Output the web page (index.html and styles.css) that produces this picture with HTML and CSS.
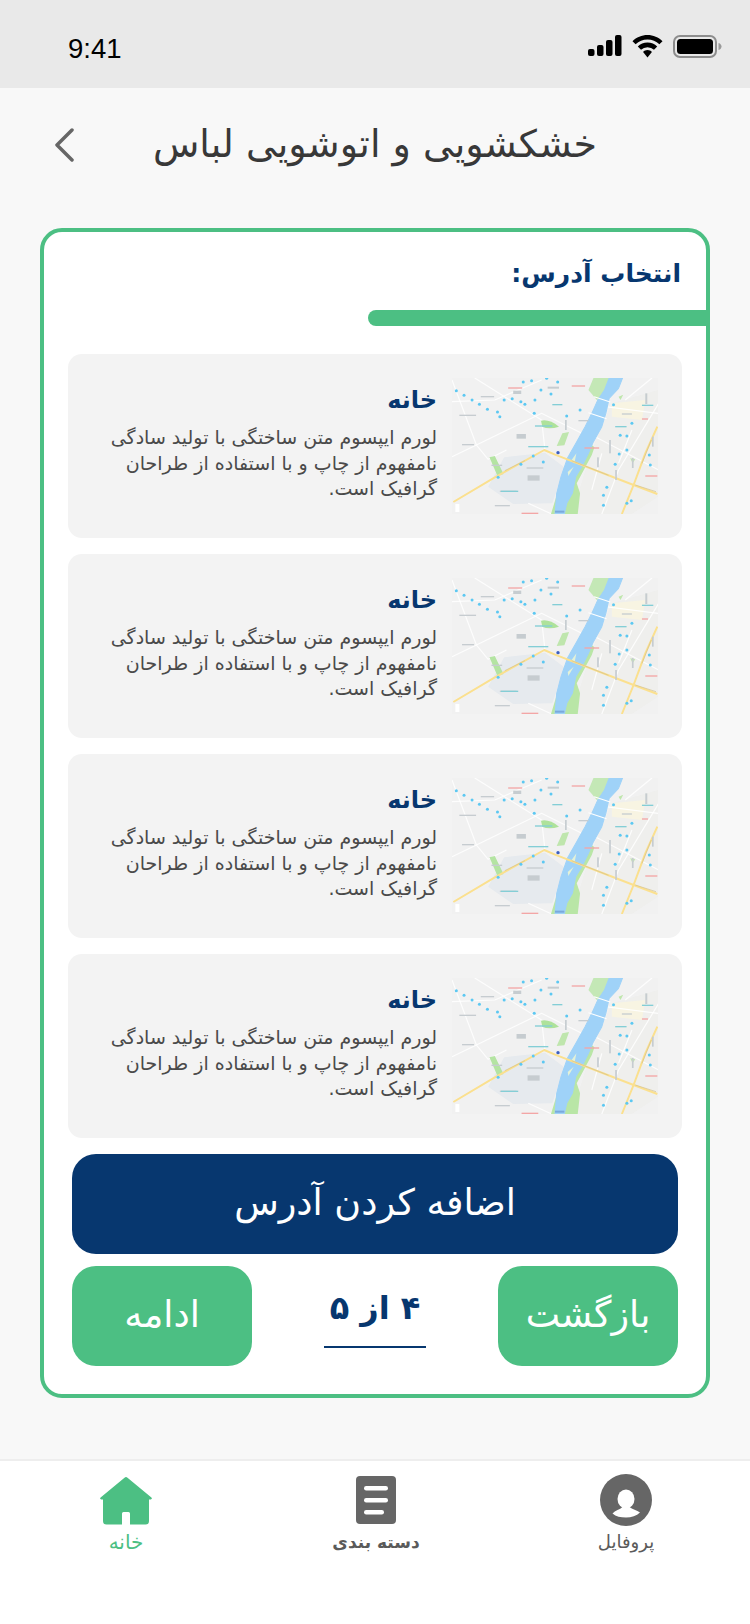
FILE: index.html
```html
<!DOCTYPE html>
<html lang="fa" dir="rtl">
<head>
<meta charset="utf-8">
<title>خشکشویی و اتوشویی لباس</title>
<link rel="stylesheet" href="styles.css">
</head>
<body>
<svg class="defs" width="0" height="0" aria-hidden="true">
  <defs>
    <filter id="soft" x="0" y="0" width="100%" height="100%"><feGaussianBlur stdDeviation="1.3"/></filter>
    <symbol id="map" viewBox="22 24 616 408" preserveAspectRatio="none">
      <rect x="22" y="24" width="616" height="408" fill="#f1f1f1"/>
      <g filter="url(#soft)">
        <path d="M500 100 L638 60 V380 L560 432 H380 L440 240Z" fill="#efefed"/>
        <path d="M500 100 L600 90 L590 150 L500 140Z" fill="#f8f4e2"/>
        <path d="M130 350 L178 262 L300 248 L358 292 L322 400 L205 402Z" fill="#e6eaee"/>
        <g fill="none" stroke="#fff" stroke-width="3.500" stroke-opacity=".85">
          <path d="M22 30 L95 225 L130 268 L185 240"/>
          <path d="M22 260 L95 225 L290 130 L410 190"/>
          <path d="M90 24 L290 150 L300 240"/>
          <path d="M22 95 L150 90 L290 30"/>
          <path d="M430 190 L640 300"/>
          <path d="M500 24 L430 250"/>
          <path d="M640 100 L520 300 L470 432"/>
          <path d="M540 90 L620 24"/>
          <path d="M480 110 L638 130"/>
          <path d="M250 400 L320 432"/>
          <path d="M470 250 L440 360"/>
          <path d="M560 180 L520 280"/>
        </g>
        <path d="M445 24 H495 L485 78 L455 90 L430 60Z" fill="#c4e8b6"/>
        <path d="M288 152 Q312 146 342 170 Q312 180 292 170Z" fill="#aee29a"/>
        <path d="M335 228 L352 190 L372 186 L358 226Z" fill="#bfe6ad"/>
        <path d="M134 262 L150 258 L176 312 L158 318Z" fill="#b4e4a2"/>
        <path d="M555 265 L570 268 L562 280Z M520 80 L534 74 L526 90Z" fill="#bfe6ad"/>
        <path d="M410 200 L355 310 L318 432 H398 L405 370 L395 340 L440 255 L448 232Z" fill="#b9e6a6"/>
        <path d="M492 24 H532 L520 55 L492 85 L482 130 L470 170 L445 215 L430 250 L410 290 L392 320 L382 370 L365 400 L358 432 H330 L335 370 L348 320 L367 265 L395 215 L420 170 L440 130 L458 90 L478 60Z" fill="#9fd2f8" stroke="#9fd2f8" stroke-width="3" stroke-linejoin="round"/>
        <path d="M378 272 L394 250 L388 280Z M368 306 L386 290 L370 318Z" fill="#e3f1d8"/>
        <g fill="none" stroke="#fff" stroke-width="3">
          <path d="M447 80 L495 96"/>
          <path d="M430 128 L484 146"/>
        </g>
        <g fill="none" stroke="#fbe08e" stroke-width="6" stroke-linejoin="round">
          <path d="M26 396 L150 322 L298 240 L330 254 L565 345 L636 372"/>
          <path d="M636 170 L600 250 L565 345 L530 432"/>
        </g>
        <g fill="none" stroke="#d2bf8e" stroke-width="2">
          <path d="M180 302 L240 272"/>
          <path d="M380 272 L490 316"/>
          <path d="M618 210 L590 280"/>
          <path d="M570 345 L632 365"/>
        </g>
        <g fill="#5cc8f2">
          <circle cx="35" cy="62" r="4.500"/><circle cx="58" cy="76" r="4.500"/><circle cx="82" cy="90" r="4.500"/>
          <circle cx="104" cy="103" r="4.500"/><circle cx="128" cy="118" r="4.500"/><circle cx="158" cy="126" r="4.500"/>
          <circle cx="165" cy="140" r="4.500"/><circle cx="178" cy="90" r="4.500"/><circle cx="202" cy="86" r="4.500"/>
          <circle cx="235" cy="36" r="4.500"/><circle cx="260" cy="32" r="4.500"/><circle cx="228" cy="95" r="4.500"/>
          <circle cx="240" cy="103" r="4.500"/><circle cx="270" cy="90" r="4.500"/><circle cx="268" cy="130" r="4.500"/>
          <circle cx="288" cy="60" r="4.500"/><circle cx="305" cy="25" r="4.500"/><circle cx="338" cy="36" r="4.500"/>
          <circle cx="318" cy="72" r="4.500"/><circle cx="365" cy="138" r="4.500"/><circle cx="405" cy="120" r="4.500"/>
          <circle cx="265" cy="258" r="4.500"/><circle cx="295" cy="276" r="4.500"/><circle cx="228" cy="283" r="4.500"/>
          <circle cx="160" cy="322" r="4.500"/><circle cx="525" cy="196" r="4.500"/><circle cx="545" cy="198" r="4.500"/>
          <circle cx="545" cy="240" r="4.500"/><circle cx="522" cy="252" r="4.500"/><circle cx="510" cy="283" r="4.500"/>
          <circle cx="505" cy="104" r="4.500"/><circle cx="560" cy="160" r="4.500"/><circle cx="612" cy="255" r="4.500"/>
          <circle cx="485" cy="352" r="4.500"/><circle cx="475" cy="376" r="4.500"/><circle cx="475" cy="406" r="4.500"/>
          <circle cx="545" cy="400" r="4.500"/><circle cx="558" cy="392" r="4.500"/><circle cx="615" cy="285" r="4.500"/>
        </g>
        <g fill="#c6ccd0">
          <rect x="108" y="78" width="40" height="4"/><rect x="205" y="62" width="24" height="10"/>
          <rect x="308" y="50" width="34" height="6"/><rect x="44" y="134" width="50" height="4"/>
          <rect x="215" y="192" width="28" height="14"/><rect x="400" y="150" width="30" height="4"/>
          <rect x="245" y="292" width="50" height="4"/><rect x="248" y="316" width="36" height="16"/>
          <rect x="165" y="362" width="50" height="4"/><rect x="150" y="405" width="45" height="4"/>
          <rect x="492" y="210" width="5" height="40"/><rect x="510" y="300" width="5" height="30"/>
          <rect x="560" y="264" width="5" height="30"/><rect x="456" y="262" width="5" height="30"/>
          <rect x="600" y="70" width="6" height="32"/><rect x="140" y="284" width="32" height="4"/>
          <rect x="360" y="150" width="5" height="30"/><rect x="620" y="200" width="5" height="30"/>
          <rect x="530" y="130" width="30" height="4"/><rect x="52" y="222" width="36" height="4"/>
        </g>
        <g fill="#84ced6">
          <rect x="250" y="228" width="60" height="4"/><rect x="270" y="166" width="52" height="4"/>
          <rect x="322" y="102" width="30" height="4"/><rect x="168" y="362" width="52" height="4"/>
          <rect x="510" y="168" width="34" height="4"/><rect x="590" y="104" width="34" height="4"/>
        </g>
        <g fill="#f3a6a6">
          <rect x="190" y="52" width="42" height="4"/><rect x="380" y="46" width="40" height="4"/>
          <rect x="418" y="232" width="44" height="4"/><rect x="230" y="428" width="50" height="4"/>
          <rect x="600" y="316" width="36" height="4"/><rect x="590" y="145" width="18" height="4"/>
        </g>
        <rect x="32" y="402" width="12" height="24" fill="#fff"/>
        <rect x="330" y="422" width="28" height="6" fill="#7aa9dc"/>
      </g>
      <circle cx="339" cy="248" r="5" fill="#3b5fc0" filter="url(#soft)"/>
    </symbol>
  </defs>
</svg>

<div class="app">
  <div class="status" dir="ltr">
    <span class="time">9:41</span>
    <div class="status-icons">
      <svg class="signal" width="34" height="22" viewBox="0 0 34 22" aria-hidden="true">
        <rect x="0" y="14" width="6.5" height="7" rx="2"/>
        <rect x="9" y="10" width="6.5" height="11" rx="2"/>
        <rect x="18" y="5" width="6.5" height="16" rx="2"/>
        <rect x="27" y="0" width="6.5" height="21" rx="2"/>
      </svg>
      <svg class="wifi" width="31" height="23" viewBox="0 0 31 23" aria-hidden="true">
        <path d="M15.5 0C9.7 0 4.4 2.300.5 6.200L3.600 9.300A17 17 0 0 1 27.400 9.300L30.500 6.200C26.600 2.300 21.300 0 15.500 0Z"/>
        <path d="M15.500 7.600C11.700 7.600 8.300 9.100 5.800 11.600L9 14.800A9.300 9.300 0 0 1 22 14.800L25.200 11.600C22.700 9.100 19.300 7.600 15.500 7.600Z"/>
        <path d="M15.500 15C13.700 15 12.200 15.700 11.100 16.900L15.500 22.500L19.900 16.900C18.800 15.700 17.300 15 15.500 15Z"/>
      </svg>
      <svg class="battery" width="49" height="23" viewBox="0 0 49 23" aria-hidden="true">
        <rect x="1" y="1" width="42" height="21" rx="6" fill="none" stroke="#8d8d8d" stroke-width="2"/>
        <rect x="4" y="4" width="36" height="15" rx="3.500" fill="#000"/>
        <path d="M45.500 8V15C47.500 14.500 48.500 13 48.500 11.500S47.500 8.500 45.500 8Z" fill="#9a9a9a"/>
      </svg>
    </div>
  </div>

  <header class="topbar">
    <span class="topbar-spacer"></span>
    <h1 class="page-title">خشکشویی و اتوشویی لباس</h1>
    <svg class="back" width="20" height="34" viewBox="0 0 20 34" aria-hidden="true">
      <path d="M18 2 3 17l15 15" fill="none" stroke="#666" stroke-width="3.500" stroke-linecap="round" stroke-linejoin="round"/>
    </svg>
  </header>

  <main class="panel">
    <div class="panel-head">
      <h2 class="panel-title">انتخاب آدرس:</h2>
      <div class="panel-bar"></div>
    </div>

    <div class="address-list">
      <article class="address">
        <svg class="address-map" aria-hidden="true"><use href="#map"/></svg>
        <div class="address-text">
          <h3 class="address-name">خانه</h3>
          <p class="address-desc">لورم ایپسوم متن ساختگی با تولید سادگی<br>نامفهوم از چاپ و با استفاده از طراحان<br>گرافیک است.</p>
        </div>
      </article>
      <article class="address">
        <svg class="address-map" aria-hidden="true"><use href="#map"/></svg>
        <div class="address-text">
          <h3 class="address-name">خانه</h3>
          <p class="address-desc">لورم ایپسوم متن ساختگی با تولید سادگی<br>نامفهوم از چاپ و با استفاده از طراحان<br>گرافیک است.</p>
        </div>
      </article>
      <article class="address">
        <svg class="address-map" aria-hidden="true"><use href="#map"/></svg>
        <div class="address-text">
          <h3 class="address-name">خانه</h3>
          <p class="address-desc">لورم ایپسوم متن ساختگی با تولید سادگی<br>نامفهوم از چاپ و با استفاده از طراحان<br>گرافیک است.</p>
        </div>
      </article>
      <article class="address">
        <svg class="address-map" aria-hidden="true"><use href="#map"/></svg>
        <div class="address-text">
          <h3 class="address-name">خانه</h3>
          <p class="address-desc">لورم ایپسوم متن ساختگی با تولید سادگی<br>نامفهوم از چاپ و با استفاده از طراحان<br>گرافیک است.</p>
        </div>
      </article>
    </div>

    <div class="actions">
      <button class="btn btn-navy" type="button">اضافه کردن آدرس</button>
      <div class="steps">
        <button class="btn btn-green" type="button">بازگشت</button>
        <div class="step-count">۴ از ۵</div>
        <button class="btn btn-green" type="button">ادامه</button>
      </div>
    </div>
  </main>

  <nav class="tabbar">
    <div class="tab">
      <svg class="tab-icon" width="52" height="52" viewBox="0 0 52 52" aria-hidden="true">
        <circle cx="26" cy="26" r="26" fill="#666"/>
        <ellipse cx="26" cy="25" rx="8.500" ry="9.500" fill="#fff"/>
        <path d="M12.500 39.500C15 36.500 20 35.500 22.500 33H29.500C32 35.500 37 36 40 38.500C36.500 42 31.500 43.500 26 43.500S16 42.500 12.500 39.500Z" fill="#fff"/>
      </svg>
      <span class="tab-label">پروفایل</span>
    </div>
    <div class="tab">
      <svg class="tab-icon" width="40" height="52" viewBox="0 0 40 52" aria-hidden="true">
        <rect x="0" y="2" width="40" height="48" rx="4" fill="#666"/>
        <rect x="8" y="12" width="24" height="4.500" rx="2.200" fill="#fff"/>
        <rect x="8" y="24" width="24" height="4.500" rx="2.200" fill="#fff"/>
        <rect x="8" y="36" width="20" height="4.500" rx="2.200" fill="#fff"/>
      </svg>
      <span class="tab-label tab-label-bold">دسته بندی</span>
    </div>
    <div class="tab">
      <svg class="tab-icon" width="52" height="52" viewBox="0 0 52 52" aria-hidden="true">
        <path fill="#4cbf83" d="M24.500 3.700 .6 23.400c-.9.8-.4 2 .7 2H3V47a3.500 3.500 0 0 0 3.500 3.500H22V39.500a1.500 1.500 0 0 1 1.500-1.500h5a1.500 1.500 0 0 1 1.500 1.500V50.500h15.500A3.500 3.500 0 0 0 49 47V25.400h1.700c1.100 0 1.600-1.200.7-2L27.500 3.700a2.300 2.300 0 0 0-3 0Z"/>
      </svg>
      <span class="tab-label tab-label-active">خانه</span>
    </div>
  </nav>
</div>
</body>
</html>
```

FILE: styles.css
```css
* { box-sizing: border-box; }

html, body {
  margin: 0;
  padding: 0;
}

body {
  width: 750px;
  height: 1624px;
  overflow: hidden;
  background: #f8f8f8;
  font-family: "DejaVu Sans", "Noto Sans", sans-serif;
}

.defs { display: block; height: 0; }

.app {
  width: 750px;
  height: 1624px;
  display: flex;
  flex-direction: column;
}

/* status bar */
.status {
  height: 88px;
  background: #e9e9e9;
  display: flex;
  align-items: flex-start;
  justify-content: space-between;
  padding: 34px 28px 0 68px;
}

.time {
  font-family: "Liberation Sans", sans-serif;
  font-size: 27.5px;
  line-height: 30px;
  color: #000;
}

.status-icons {
  display: flex;
  align-items: flex-start;
  gap: 10px;
  padding-top: 1px;
}

.signal, .wifi { fill: #000; }

/* header */
.topbar {
  height: 114px;
  display: grid;
  grid-template-columns: 1fr auto 1fr;
  align-items: center;
  padding: 0 55px;
}

.back { justify-self: end; margin-left: -1px; }

.page-title {
  margin: 0;
  font-size: 38px;
  font-weight: 400;
  color: #383838;
  line-height: 1.2;
  white-space: nowrap;
}

/* panel */
.panel {
  margin: 26px 40px 0;
  height: 1170px;
  background: #fff;
  border: 4px solid #4cbf83;
  border-radius: 22px;
  display: flex;
  flex-direction: column;
}

.panel-head {
  display: flex;
  flex-direction: column;
  align-items: flex-start;
  height: 94px;
}

.panel-title {
  margin: 0;
  height: 78px;
  padding: 25px 25px 0 0;
  font-size: 25px;
  line-height: 34px;
  font-weight: 700;
  color: #07376f;
}

.panel-bar {
  width: 342px;
  height: 16px;
  margin-right: -4px;
  background: #4cbf83;
  border-radius: 8px 0 0 8px;
}

.address-list {
  margin-top: 28px;
  padding: 0 24px;
  display: flex;
  flex-direction: column;
  gap: 16px;
}

.address {
  height: 184px;
  background: #f3f3f3;
  border-radius: 14px;
  padding: 24px;
  display: flex;
  align-items: center;
  gap: 15px;
}

.address-map {
  width: 206px;
  height: 136px;
  flex: none;
}

.address-text {
  min-width: 0;
  padding-bottom: 6px;
}

.address-name {
  margin: 0 0 9px;
  font-size: 24px;
  line-height: 32px;
  font-weight: 700;
  color: #07376f;
}

.address-desc {
  margin: 0;
  font-size: 19px;
  line-height: 25.500px;
  color: #4a4a4a;
  white-space: nowrap;
}

/* actions */
.actions {
  margin-top: 16px;
  padding: 0 28px;
  display: flex;
  flex-direction: column;
  gap: 12px;
}

.btn {
  height: 100px;
  border: 0;
  border-radius: 24px;
  color: #fff;
  font-family: inherit;
  font-size: 36.5px;
  padding: 0 0 4px;
}

.btn-navy { background: #07376f; width: 100%; }
.btn-green { background: #4cbf83; width: 180px; }

.steps {
  display: flex;
  justify-content: space-between;
  align-items: center;
}

.step-count {
  width: 102px;
  height: 64px;
  border-bottom: 2px solid #07376f;
  color: #07376f;
  font-size: 32px;
  font-weight: 700;
  line-height: 48px;
  text-align: center;
  white-space: nowrap;
}

/* tab bar */
.tabbar {
  margin-top: 61px;
  flex: 1;
  background: #fff;
  border-top: 2px solid #eeeeee;
  display: grid;
  grid-template-columns: repeat(3, 248px);
  column-gap: 2px;
  padding: 13px 0 0 2px;
  grid-auto-rows: min-content;
}

.tab {
  display: flex;
  flex-direction: column;
  align-items: center;
}

.tab-icon { display: block; }

.tab-label {
  margin-top: 2px;
  font-size: 18px;
  line-height: 28px;
  color: #5a5a5a;
}

.tab-label-bold { font-size: 17px; font-weight: 700; }
.tab-label-active { font-size: 20px; color: #4cbf83; }
```
